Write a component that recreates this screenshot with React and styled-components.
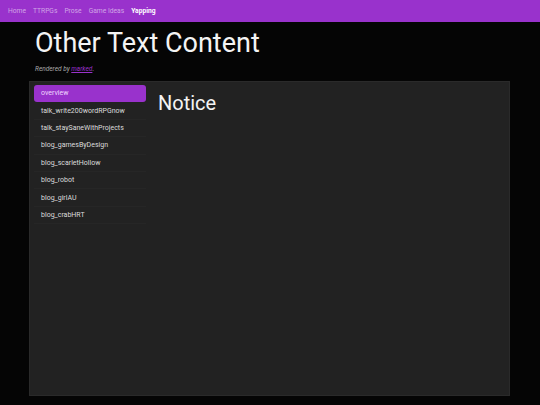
import React from "react";
import styled, { createGlobalStyle } from "styled-components";

const Global = createGlobalStyle`
  html, body { margin: 0; padding: 0; background: #050505; }
  body { font-family: Roboto, "Liberation Sans", sans-serif; color: #eee; }
  * { box-sizing: border-box; }
`;

const Page = styled.div`
  width: 540px;
  height: 405px;
  display: flex;
  flex-direction: column;
  overflow: hidden;
`;

const NavBar = styled.nav`
  height: 22px;
  background: #9932cc;
  display: flex;
  align-items: center;
  gap: 7px;
  padding: 0 8px;
  flex-shrink: 0;
`;

const NavLink = styled.a`
  font-size: 6.7px;
  color: ${(p) => (p.$active ? "#ffffff" : "rgba(255,255,255,0.55)")};
  font-weight: ${(p) => (p.$active ? 700 : 400)};
  text-decoration: none;
`;

const Header = styled.header`
  padding: 5px 35px 0;
  height: 59px;
  flex-shrink: 0;
`;

const Title = styled.h1`
  margin: 0;
  font-size: 27px;
  font-weight: 400;
  line-height: 33px;
  color: #f4f4f4;
`;

const Byline = styled.p`
  margin: 5px 0 0;
  font-size: 6.5px;
  font-style: italic;
  color: #aaa;
`;

const Link = styled.a`
  color: #9932cc;
  text-decoration: underline;
`;

const Panel = styled.main`
  margin: 0 30px 0 29px;
  height: 315px;
  background: #222;
  border: 1px solid #2a2a2a;
  display: flex;
  gap: 12px;
  padding: 3px 4px;
`;

const Sidebar = styled.ul`
  list-style: none;
  margin: 0;
  padding: 0;
  width: 112px;
  display: flex;
  flex-direction: column;
`;

const Item = styled.li`
  height: 17.4px;
  display: flex;
  align-items: center;
  padding: 0 7px;
  font-size: 7px;
  color: ${(p) => (p.$active ? "#f0d8ff" : "#dcdcdc")};
  background: ${(p) => (p.$active ? "#9932cc" : "transparent")};
  border-radius: ${(p) => (p.$active ? "3px" : "0")};
  border-bottom: 1px solid ${(p) => (p.$active ? "transparent" : "#262626")};
`;

const Content = styled.section`
  flex: 1;
`;

const Heading = styled.h2`
  margin: 6px 0 0;
  font-size: 20px;
  font-weight: 400;
  color: #f4f4f4;
`;

const navs = ["Home", "TTRPGs", "Prose", "Game Ideas", "Yapping"];
const items = [
  "overview",
  "talk_write200wordRPGnow",
  "talk_staySaneWithProjects",
  "blog_gamesByDesign",
  "blog_scarletHollow",
  "blog_robot",
  "blog_girlAU",
  "blog_crabHRT",
];

export default function App() {
  return (
    <Page>
      <Global />
      <NavBar>
        {navs.map((n) => (
          <NavLink key={n} $active={n === "Yapping"}>
            {n}
          </NavLink>
        ))}
      </NavBar>
      <Header>
        <Title>Other Text Content</Title>
        <Byline>
          Rendered by <Link>marked</Link>.
        </Byline>
      </Header>
      <Panel>
        <Sidebar>
          {items.map((it, i) => (
            <Item key={it} $active={i === 0}>
              {it}
            </Item>
          ))}
        </Sidebar>
        <Content>
          <Heading>Notice</Heading>
        </Content>
      </Panel>
    </Page>
  );
}
